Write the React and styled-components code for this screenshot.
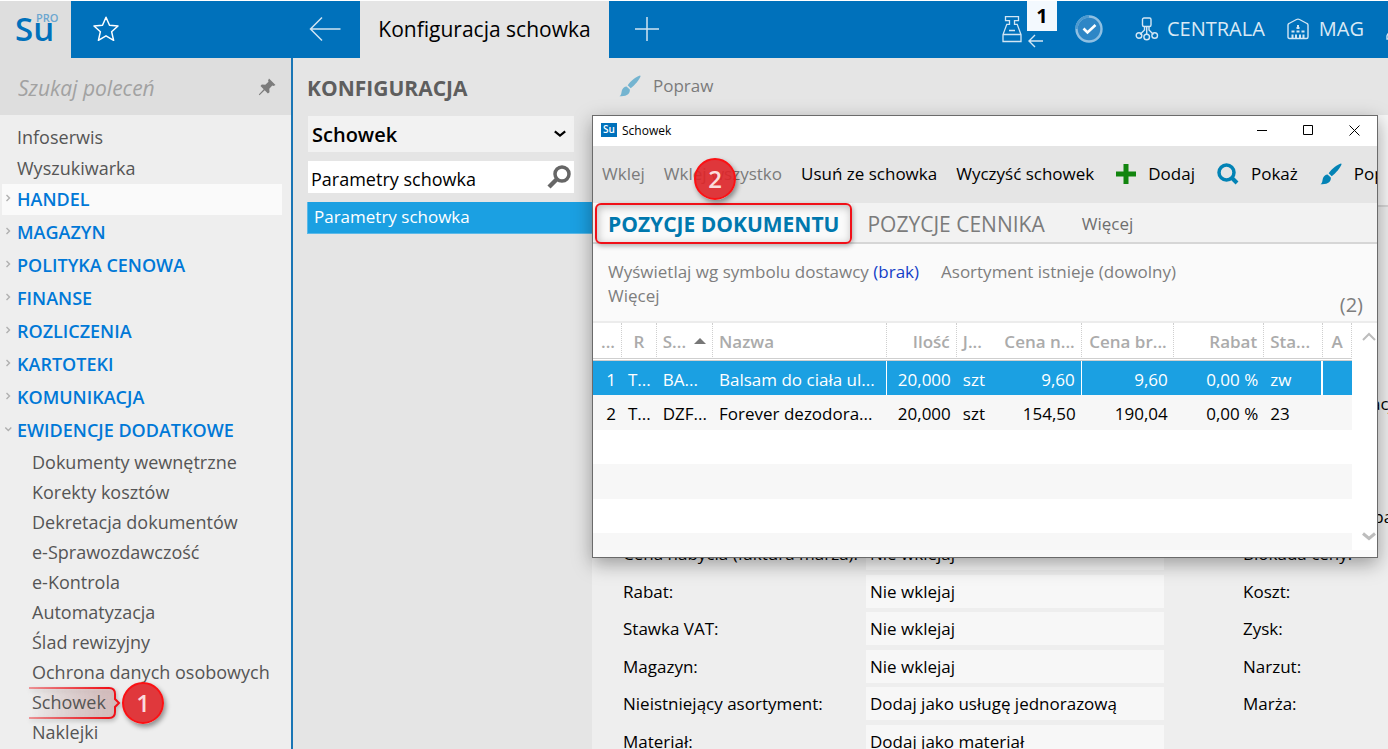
import React from 'react'
import styled, { createGlobalStyle } from 'styled-components'

const GlobalStyle = createGlobalStyle`
    *, *::before, *::after{
        box-sizing: border-box;
    }

    body{
        margin: 0;
        background-color: #fff;
        font-family: "Open Sans", "Noto Sans", sans-serif;
        font-size: 17px;
        color: #000;
        overflow: hidden;
    }

    button, input, select{
        font: inherit;
        color: inherit;
        border: none;
        background: none;
        padding: 0;
        margin: 0;
        border-radius: 0;
        outline: none;
    }

    a{
        color: inherit;
        text-decoration: none;
    }

    ul{
        list-style: none;
        margin: 0;
        padding: 0;
    }

    svg{
        display: block;
        flex: none;
    }
`

const Page = styled.div`
    display: flex;
    flex-direction: column;
    height: 100vh;
    padding-top: 1px;
    overflow: hidden;
`

/* top bar */

const TopBar = styled.header`
    display: flex;
    align-items: stretch;
    flex: none;
    height: 57px;
    background-color: #0071bb;
    color: #d9e9f5;
    overflow: hidden;

    button{
        padding-bottom: 2px;
    }
`

const Logo = styled.a`
    position: relative;
    width: 71px;
    padding: 9px 0 0 15px;
    background-color: #dedede;
    color: #0071bb;
    font-size: 33px;
    line-height: 38px;
    font-weight: 600;
`

const LogoTag = styled.span`
    position: absolute;
    left: 36px;
    top: 11px;
    font-size: 11px;
    line-height: 11px;
    color: #6aa6d0;
`

const BarButton = styled.button`
    display: flex;
    align-items: center;
    justify-content: center;
    width: ${({ $width }) => $width || 70}px;
    margin-left: ${({ $push }) => $push ? 'auto' : '0'};
`

const BarLeft = styled.div`
    display: flex;
    width: 289px;
`

const ActiveTab = styled.button`
    width: 249px;
    background-color: #e5e5e5;
    color: #000;
    font-size: 21px;
    font-weight: 500;
    white-space: nowrap;
`

const BarRight = styled.div`
    display: flex;
    align-items: stretch;
    margin-left: auto;
    margin-right: -20px;
`

const RegisterButton = styled.button`
    display: flex;
    align-items: center;
    gap: 5px;
`

const Counter = styled.span`
    display: flex;
    flex-direction: column;
    align-self: flex-start;
    gap: 3px;
    width: 30px;
`

const CounterValue = styled.span`
    height: 30px;
    background-color: #f3f9fe;
    color: #000;
    font-size: 20px;
    line-height: 30px;
    font-weight: 700;
    text-align: center;
`

const Place = styled.button`
    display: flex;
    align-items: center;
    gap: ${({ $gap }) => $gap || 8}px;
    margin-left: 14px;
    font-size: 20px;

    & + &{
        margin-left: 22px;
    }
`

/* body columns */

const Body = styled.div`
    display: flex;
    flex: 1;
    min-height: 0;
    background-color: #e5e5e5;
`

const Sidebar = styled.nav`
    flex: none;
    width: 293px;
    background-color: #eee;
    border-right: 2px solid #1a76b5;
    color: #555;
`

const CommandSearch = styled.label`
    display: flex;
    align-items: center;
    height: 57px;
    padding: 0 15px 0 18px;
    background-color: #dedede;
    color: #777;

    input{
        flex: 1;
        min-width: 0;
        height: 32px;
        padding-top: 2px;
        font-size: 21px;
        font-style: italic;
    }

    input::placeholder{
        color: #a2a2a2;
        opacity: 1;
    }
`

const Menu = styled.ul`
    padding-top: 7px;
`

const MenuLink = styled.a`
    display: flex;
    align-items: center;
    height: 31px;
    padding: 0 0 2px 17px;
    font-size: 18px;
`

const GroupLink = styled.a`
    display: flex;
    align-items: center;
    gap: 5px;
    height: 31px;
    margin: 0 9px 2px 2px;
    padding: 0 0 2px 3px;
    background-color: ${({ $active }) => $active ? '#fafafa' : 'transparent'};
    color: #0078d7;
    font-size: 18px;
    font-weight: 600;
`

const SubLink = styled.a`
    display: flex;
    align-items: center;
    height: 30px;
    padding: 0 0 2px 32px;
    font-size: 18px;
`

const Marked = styled.span`
    position: relative;
`

const Config = styled.section`
    flex: none;
    width: 299px;
    padding-left: 14px;
`

const ConfigTitle = styled.h1`
    height: 58px;
    margin: 0;
    padding-top: 2px;
    font-size: 21px;
    line-height: 57px;
    font-weight: 700;
    color: #5e5e5e;
`

const SelectBox = styled.div`
    display: grid;
    align-items: center;
    margin: 0 18px 9px 1px;
    background-color: #f2f2f2;

    select{
        grid-area: 1 / 1;
        appearance: none;
        height: 36px;
        padding-left: 4px;
        font-size: 20px;
        font-weight: 600;
    }

    svg{
        grid-area: 1 / 1;
        justify-self: end;
        margin-right: 8px;
        pointer-events: none;
    }
`

const FilterBox = styled.label`
    display: flex;
    align-items: center;
    height: 32px;
    margin: 0 18px 9px 1px;
    padding: 0 3px;
    background-color: #fff;
    color: #666;

    input{
        flex: 1;
        min-width: 0;
        height: 32px;
        padding-top: 3px;
        font-size: 18px;
        color: #000;
    }
`

const ConfigItem = styled.a`
    display: block;
    height: 32px;
    padding-left: 6px;
    border: 1px solid #5bb9e8;
    border-width: 0 0 1px 1px;
    background-color: #1ba0e2;
    color: #fff;
    font-size: 17px;
    line-height: 29px;
`

const Main = styled.main`
    flex: 1;
    min-width: 0;
    overflow: hidden;
`

const Tools = styled.div`
    display: flex;
    align-items: center;
    height: 57px;
    padding: 0 0 2px 27px;
    color: #777;
`

const ToolButton = styled.button`
    display: flex;
    align-items: center;
    flex: none;
    gap: 12px;
    font-size: 17px;
    color: ${({ $muted }) => $muted ? '#7b7b7b' : '#000'};
    white-space: nowrap;
`

const Banner = styled.div`
    height: 92px;
    border-bottom: 2px solid #d6d6d6;
    background-color: #f7f7f7;
`

const Form = styled.form`
    padding: 180px 0 0 31px;
    background-color: #eee;
    font-size: 17px;
`

const FormRow = styled.div`
    display: grid;
    grid-template-columns: 243px 298px minmax(0, 1fr);
    align-items: center;
    height: 33px;
    margin-bottom: 4px;

    &:nth-child(odd){
        margin-bottom: 5px;
    }

    label{
        white-space: nowrap;
    }

    input{
        min-width: 0;
        height: 33px;
        padding-left: 4px;
        background-color: #f7f7f7;
    }
`

const SideLabel = styled.span`
    padding-left: 79px;
    white-space: nowrap;
`

/* clipboard window */

const Window = styled.section`
    position: absolute;
    left: 592px;
    top: 115px;
    right: 10px;
    height: 443px;
    display: flex;
    flex-direction: column;
    border: 1px solid #6b6b6b;
    background-color: #fafafa;
    box-shadow: 0 6px 18px rgba(0, 0, 0, 0.35);
`

const TitleBar = styled.header`
    display: flex;
    align-items: center;
    flex: none;
    height: 30px;
    padding: 0 0 2px 8px;
    background-color: #fff;
    font-size: 12px;
`

const WindowIcon = styled.span`
    width: 16px;
    height: 14px;
    margin-right: 5px;
    background-color: #0071bb;
    color: #fff;
    font-size: 10px;
    line-height: 13px;
    font-weight: 600;
    text-align: center;
`

const WindowButtons = styled.div`
    display: flex;
    margin-left: auto;

    button{
        display: flex;
        align-items: center;
        justify-content: center;
        width: 46px;
        height: 28px;
    }
`

const WindowTools = styled(Tools)`
    flex: none;
    gap: 19px;
    padding-left: 9px;
    background-color: #e5e5e5;
    overflow: hidden;

    svg{
        margin-left: 3px;
    }
`

const Tabs = styled.div`
    display: flex;
    align-items: center;
    flex: none;
    height: 41px;
    border-bottom: 2px solid #d6d6d6;
    background-color: #f2f2f2;
`

const Tab = styled.button`
    position: relative;
    height: 39px;
    padding: 3px 13px 0 15px;
    font-size: 21px;
    font-weight: ${({ $active }) => $active ? 700 : 400};
    background-color: ${({ $active }) => $active ? '#fafafa' : 'transparent'};
    color: ${({ $active }) => $active ? '#0078ae' : '#7b7b7b'};
    white-space: nowrap;
`

const MoreTab = styled.button`
    margin-left: 24px;
    padding-top: 2px;
    font-size: 17px;
    color: #6e6e6e;
`

const Filters = styled.div`
    display: flex;
    justify-content: space-between;
    flex: none;
    height: 79px;
    padding: 16px 14px 0 15px;
    border-bottom: 2px solid #ececec;
    color: #7e7e7e;
    line-height: 24px;
`

const FilterList = styled.div`
    display: grid;
    grid-template-columns: auto auto;
    align-content: start;
    column-gap: 22px;

    button{
        text-align: left;
        line-height: 24px;
    }

    b{
        font-weight: 400;
        color: #1440c8;
    }
`

const Count = styled.span`
    align-self: flex-end;
    padding-bottom: 4px;
    font-size: 20px;
`

const GridArea = styled.div`
    display: flex;
    flex: 1;
    min-height: 0;
    margin-bottom: 7px;
    background-color: #fff;
    overflow: hidden;
`

const Table = styled.table`
    flex: 1;
    align-self: flex-start;
    min-width: 0;
    border-spacing: 0;
    table-layout: fixed;
    font-size: 17px;

    th, td{
        overflow: hidden;
        white-space: nowrap;
        padding: 2px 6px 0 6px;
        height: 34px;
    }

    tbody tr:nth-child(even) td{
        height: 35px;
    }
`

const HeadCell = styled.th`
    && {
        height: 38px;
    }
    color: #ababab;
    font-weight: 600;
    text-align: ${({ $align }) => $align || 'left'};
    border-right: ${({ $plain }) => $plain ? 'none' : '1px dotted #cfcfcf'};
    border-bottom: 3px double #cfcfcf;

    svg{
        display: inline-block;
        margin-left: 8px;
        vertical-align: 4px;
    }
`

const Row = styled.tr`
    background-color: ${({ $index }) => $index % 2 ? '#f7f7f7' : '#fff'};

    ${({ $selected }) => $selected && `
        && {
            background-color: #1ba0e2;
            color: #fff;
        }
    `}
`

const Cell = styled.td`
    text-align: ${({ $align }) => $align || 'left'};
    border-right: ${({ $split }) => $split ? `${$split}px solid #fff` : 'none'};
`

const Scroll = styled.div`
    display: flex;
    flex-direction: column;
    justify-content: space-between;
    align-items: center;
    width: 25px;
    padding: 9px 0 9px 9px;

    button{
        display: flex;
    }
`

/* numbered markers */

const Marker = styled.span`
    position: absolute;
    left: ${({ $left }) => $left}px;
    top: ${({ $top }) => $top}px;
    z-index: 2;
    display: flex;
    align-items: center;
    justify-content: center;
    width: 42px;
    height: 42px;
    padding-bottom: 2px;
    border: 2px solid #fb1114;
    border-radius: 50%;
    background-color: rgba(222, 36, 40, 0.9);
    box-shadow: 2px 3px 5px rgba(0, 0, 0, 0.4);
    color: #fbdcdc;
    font-size: 24px;
    font-weight: 600;
`

const TabFrame = styled.span`
    position: absolute;
    left: 2px;
    right: 0;
    top: 0;
    height: 41px;
    border: 2px solid #f01018;
    border-radius: 6px;
    box-shadow: 1px 2px 5px rgba(0, 0, 0, 0.3), inset 1px 2px 8px rgba(0, 0, 0, 0.25);
`

const Bracket = styled.svg`
    position: absolute;
    left: -3px;
    top: -3px;
    filter: drop-shadow(1px 2px 2px rgba(0, 0, 0, 0.3));
`

const MarkedText = styled.span`
    position: relative;
`

const Brush = ({ color }) => (
    <svg width="22" height="22" viewBox="0 0 22 22" fill={color}>
        <path d="M21 .5c-3 .6-9.800 5.500-12.300 9.800l3 2.900C15.500 10.500 20.600 4.500 21.600 1z" />
        <path d="M7.600 11.400l3.200 3.200c.6 4-2.800 7.200-10.300 6.600 2-1.200 1.700-3 2.300-5.500.7-2.600 2.600-4.300 4.800-4.300z" />
    </svg>
)

const Chevron = ({ down }) => (
    <svg width="7" height="9" viewBox="0 0 7 9" fill="none" stroke="#b0b0b0" strokeWidth="1.4">
        <path d={down ? 'M.3 2.500l3 3 3-3' : 'M1.500 1l3 3-3 3'} />
    </svg>
)

const groups = ['HANDEL', 'MAGAZYN', 'POLITYKA CENOWA', 'FINANSE', 'ROZLICZENIA', 'KARTOTEKI', 'KOMUNIKACJA', 'EWIDENCJE DODATKOWE']

const records = [
    'Dokumenty wewnętrzne', 'Korekty kosztów', 'Dekretacja dokumentów', 'e-Sprawozdawczość', 'e-Kontrola',
    'Automatyzacja', 'Ślad rewizyjny', 'Ochrona danych osobowych', 'Schowek', 'Naklejki',
]

const fields = [
    ['', '', 'Numer identyfikacji:'],
    ['', '', ''],
    ['', '', ''],
    ['', '', 'Blokada rabatu (para):'],
    ['Cena nabycia (faktura marża):', 'Nie wklejaj', 'Blokada ceny:'],
    ['Rabat:', 'Nie wklejaj', 'Koszt:'],
    ['Stawka VAT:', 'Nie wklejaj', 'Zysk:'],
    ['Magazyn:', 'Nie wklejaj', 'Narzut:'],
    ['Nieistniejący asortyment:', 'Dodaj jako usługę jednorazową', 'Marża:'],
    ['Materiał:', 'Dodaj jako materiał', ''],
]

const columns = [
    { title: '...', width: 29, align: 'right' },
    { title: 'R', width: 34, align: 'center' },
    { title: 'S...', width: 56, sorted: true },
    { title: 'Nazwa', width: 174, split: 1 },
    { title: 'Ilość', width: 70, align: 'right' },
    { title: 'J...', width: 34, plain: true },
    { title: 'Cena n...', width: 91, align: 'right', split: 1 },
    { title: 'Cena br...', width: 92, align: 'right' },
    { title: 'Rabat', width: 91, align: 'right' },
    { title: 'Sta...', width: 59, split: 2 },
    { title: 'A', width: 29, align: 'center' },
]

const rows = [
    ['1', 'T...', 'BA...', 'Balsam do ciała ul...', '20,000', 'szt', '9,60', '9,60', '0,00 %', 'zw', ''],
    ['2', 'T...', 'DZF...', 'Forever dezodora...', '20,000', 'szt', '154,50', '190,04', '0,00 %', '23', ''],
    [], [], [], [],
]

function Header() {
    return (
        <TopBar>
            <Logo href="#start">Su<LogoTag>PRO</LogoTag></Logo>
            <BarLeft>
                <BarButton aria-label="Ulubione">
                    <svg width="26" height="26" viewBox="0 0 26 26" fill="none" stroke="#fff" strokeWidth="1.500" strokeLinejoin="round">
                        <path d="M13 1.200l3.500 8 8.500.8-6.400 5.700 2 8.600L13 19.800l-7.600 4.500 2-8.600L1 10l8.500-.8z" />
                    </svg>
                </BarButton>
                <BarButton $push aria-label="Wstecz">
                    <svg width="32" height="26" viewBox="0 0 32 26" fill="none" stroke="#cfe3f2" strokeWidth="1.500">
                        <path d="M31.500 13H1.500M13 1.500L1.500 13 13 24.500" />
                    </svg>
                </BarButton>
            </BarLeft>
            <ActiveTab>Konfiguracja schowka</ActiveTab>
            <BarButton $width={75} aria-label="Nowa karta">
                <svg width="26" height="26" viewBox="0 0 26 26" stroke="#cfe3f2" strokeWidth="1.500">
                    <path d="M13 1v24M1 13h24" />
                </svg>
            </BarButton>
            <BarRight>
                <RegisterButton aria-label="Kasa">
                    <svg width="20" height="29" viewBox="0 0 20 29" fill="none" stroke="#d3e6f4" strokeWidth="1.300">
                        <path d="M3.500 2.700h13v4h-4v3.600h2.700L19 20.500v7H1v-7l3.800-10.200h2.700V6.700h-4zM1 20.500h18M7 16.500h6" />
                    </svg>
                    <Counter>
                        <CounterValue>1</CounterValue>
                        <svg width="17" height="14" viewBox="0 0 17 14" fill="none" stroke="#d3e6f4" strokeWidth="1.400">
                            <path d="M16 7H2M8 1L2 7l6 6" />
                        </svg>
                    </Counter>
                </RegisterButton>
                <BarButton $width={64} aria-label="Status">
                    <svg width="30" height="30" viewBox="0 0 30 30" fill="none">
                        <circle cx="15" cy="15" r="12.500" fill="#2e86c6" stroke="#8fc0e3" strokeWidth="2.400" />
                        <path d="M2.500 15A12.500 12.500 0 0 1 15 2.500" stroke="#4d9ad0" strokeWidth="2.400" />
                        <path d="M9.500 14.500l4 4 8-7.500" stroke="#fff" strokeWidth="2.600" />
                    </svg>
                </BarButton>
                <Place>
                    <svg width="24" height="24" viewBox="0 0 24 24" fill="none" stroke="#d3e6f4" strokeWidth="1.400">
                        <rect x="7.500" y="1" width="8.500" height="8.500" rx="1.500" />
                        <path d="M9.500 9.500v3.500L5 17.500M14 9.500v3.500l4.500 4.500M11.700 9.500V17" />
                        <circle cx="4" cy="18.500" r="2.800" />
                        <circle cx="11.700" cy="20" r="2.800" />
                        <circle cx="19.700" cy="18.500" r="2.800" />
                    </svg>
                    CENTRALA
                </Place>
                <Place $gap={10}>
                    <svg width="22" height="22" viewBox="0 0 22 22" fill="none" stroke="#d3e6f4" strokeWidth="1.400">
                        <path d="M1 19V7q0-1 1-1.500l7.500-4q1.500-.8 3 0l7.500 4q1 .5 1 1.500v12q0 1.500-1.500 1.500h-17Q1 20.500 1 19z" />
                        <path d="M5.500 20v-3.500M9 20v-3.500M13 20v-3.500M16.500 20v-3.500M11 7v3" strokeWidth="2" />
                        <path d="M4.500 13.500h3M9.500 13.500h3M14.500 13.500h3M9.500 10h3" strokeWidth="2" />
                    </svg>
                    MAG
                </Place>
                <Place aria-label="Użytkownik">
                    <svg width="22" height="22" viewBox="0 0 22 22" fill="none" stroke="#d3e6f4" strokeWidth="1.400">
                        <circle cx="11" cy="6" r="4.500" />
                        <path d="M1 21v-3q1-4 6-5h8q5 1 6 5v3z" />
                    </svg>
                </Place>
            </BarRight>
        </TopBar>
    )
}

function SideMenu() {
    return (
        <Sidebar>
            <CommandSearch>
                <input placeholder="Szukaj poleceń" aria-label="Szukaj poleceń" />
                <svg width="18" height="18" viewBox="0 0 18 18" fill="#7c7c7c">
                    <path d="M11 .5L17.500 7l-2 .9-1.200-.4-3 3.200.2 3.500-1.600 1.300-3.200-3.200L1.500 17.200.8 16.500l4.900-5.200L2.500 8.100l1.300-1.600 3.500.2 3.200-3-.4-1.200z" />
                </svg>
            </CommandSearch>
            <Menu>
                <li><MenuLink href="#infoserwis">Infoserwis</MenuLink></li>
                <li><MenuLink href="#wyszukiwarka">Wyszukiwarka</MenuLink></li>
                {groups.map((group, i) => (
                    <li key={group}>
                        <GroupLink href="#grupa" $active={i === 0}>
                            <Chevron down={i === groups.length - 1} />
                            {group}
                        </GroupLink>
                    </li>
                ))}
                {records.map(name => (
                    <li key={name}>
                        <SubLink href="#ewidencja">
                            {name === 'Schowek' ? (
                                <Marked>
                                    <Bracket width="92" height="32" viewBox="0 0 92 32" fill="none">
                                        <defs>
                                            <linearGradient id="edge" gradientUnits="userSpaceOnUse" x1="0" y1="0" x2="80" y2="0">
                                                <stop offset="0" stopColor="#f01018" stopOpacity="0.4" />
                                                <stop offset="1" stopColor="#f01018" />
                                            </linearGradient>
                                            <linearGradient id="tint" gradientUnits="userSpaceOnUse" x1="0" y1="0" x2="86" y2="0">
                                                <stop offset="0" stopColor="#e5b5b5" stopOpacity="0" />
                                                <stop offset="1" stopColor="#dcb4b4" stopOpacity="0.6" />
                                            </linearGradient>
                                        </defs>
                                        <path d="M0 1h80q6 0 6 6v5l4 4-4 4v5q0 6-6 6H0" fill="url(#tint)" stroke="url(#edge)" strokeWidth="2" />
                                    </Bracket>
                                    <MarkedText>{name}</MarkedText>
                                    <Marker $left={90} $top={-8}>1</Marker>
                                </Marked>
                            ) : name}
                        </SubLink>
                    </li>
                ))}
            </Menu>
        </Sidebar>
    )
}

function ConfigPanel() {
    return (
        <Config>
            <ConfigTitle>KONFIGURACJA</ConfigTitle>
            <SelectBox>
                <select aria-label="Obszar konfiguracji">
                    <option>Schowek</option>
                </select>
                <svg width="12" height="8" viewBox="0 0 12 8" fill="none" stroke="#000" strokeWidth="2.200">
                    <path d="M.8 1.300L6 5.500l5.200-4.200" />
                </svg>
            </SelectBox>
            <FilterBox>
                <input defaultValue="Parametry schowka" aria-label="Filtr" />
                <svg width="24" height="24" viewBox="0 0 24 24" fill="none" stroke="currentColor">
                    <circle cx="15" cy="9" r="7" strokeWidth="3.500" />
                    <path d="M10 14L2 22" strokeWidth="4.500" />
                </svg>
            </FilterBox>
            <ConfigItem href="#parametry">Parametry schowka</ConfigItem>
        </Config>
    )
}

function Settings() {
    return (
        <Main>
            <Tools>
                <ToolButton $muted><Brush color="#74b4d0" />Popraw</ToolButton>
            </Tools>
            <Banner />
            <Form>
                {fields.map(([label, value, side], i) => (
                    <FormRow key={i}>
                        <label htmlFor={`field-${i}`}>{label}</label>
                        <input id={`field-${i}`} defaultValue={value} />
                        <SideLabel>{side}</SideLabel>
                    </FormRow>
                ))}
            </Form>
        </Main>
    )
}

function ClipboardWindow() {
    return (
        <Window aria-label="Schowek">
            <TitleBar>
                <WindowIcon>Su</WindowIcon>
                Schowek
                <WindowButtons>
                    <button aria-label="Minimalizuj">
                        <svg width="10" height="10" stroke="#000"><path d="M0 5.500h10" /></svg>
                    </button>
                    <button aria-label="Maksymalizuj">
                        <svg width="10" height="10" fill="none" stroke="#000"><path d="M.5.5h9v9h-9z" /></svg>
                    </button>
                    <button aria-label="Zamknij">
                        <svg width="11" height="11" stroke="#000"><path d="M.5.5l10 10M10.500.5l-10 10" /></svg>
                    </button>
                </WindowButtons>
            </TitleBar>
            <WindowTools>
                <ToolButton $muted>Wklej</ToolButton>
                <ToolButton $muted>Wklej wszystko</ToolButton>
                <ToolButton>Usuń ze schowka</ToolButton>
                <ToolButton>Wyczyść schowek</ToolButton>
                <ToolButton>
                    <svg width="20" height="20" viewBox="0 0 20 20"><path d="M10 0v20M0 10h20" stroke="#12850f" strokeWidth="5" /></svg>
                    Dodaj
                </ToolButton>
                <ToolButton>
                    <svg width="22" height="22" viewBox="0 0 22 22" fill="none" stroke="#0383b5">
                        <circle cx="9.500" cy="9.500" r="7.500" strokeWidth="3.500" />
                        <path d="M14.500 14.500l5.500 5.500" strokeWidth="4" />
                    </svg>
                    Pokaż
                </ToolButton>
                <ToolButton><Brush color="#0383b5" />Popraw</ToolButton>
            </WindowTools>
            <Marker $left={101} $top={42}>2</Marker>
            <Tabs>
                <Tab $active>POZYCJE DOKUMENTU<TabFrame /></Tab>
                <Tab>POZYCJE CENNIKA</Tab>
                <MoreTab>Więcej</MoreTab>
            </Tabs>
            <Filters>
                <FilterList>
                    <button>Wyświetlaj wg symbolu dostawcy <b>(brak)</b></button>
                    <button>Asortyment istnieje (dowolny)</button>
                    <button>Więcej</button>
                </FilterList>
                <Count>(2)</Count>
            </Filters>
            <GridArea>
                <Table>
                    <colgroup>
                        {columns.map(({ title, width }) => <col key={title} width={width} />)}
                    </colgroup>
                    <thead>
                        <tr>
                            {columns.map(({ title, align, plain, sorted }) => (
                                <HeadCell key={title} $align={align} $plain={plain}>
                                    {title}
                                    {sorted && <svg width="12" height="6" fill="#777"><path d="M0 6l6-6 6 6z" /></svg>}
                                </HeadCell>
                            ))}
                        </tr>
                    </thead>
                    <tbody>
                        {rows.map((row, i) => (
                            <Row key={i} $index={i} $selected={i === 0}>
                                {columns.map(({ title, align, split }, c) => (
                                    <Cell key={title} $align={align} $split={i === 0 ? split : 0}>{row[c]}</Cell>
                                ))}
                            </Row>
                        ))}
                    </tbody>
                </Table>
                <Scroll>
                    <button aria-label="W górę">
                        <svg width="14" height="9" fill="none" stroke="#bdbdbd" strokeWidth="2"><path d="M1 8l6-6 6 6" /></svg>
                    </button>
                    <button aria-label="W dół">
                        <svg width="14" height="9" fill="none" stroke="#bdbdbd" strokeWidth="3"><path d="M1 1.500l6 5 6-5" /></svg>
                    </button>
                </Scroll>
            </GridArea>
        </Window>
    )
}

export default function App() {
    return (
        <>
            <GlobalStyle />
            <Page>
                <Header />
                <Body>
                    <SideMenu />
                    <ConfigPanel />
                    <Settings />
                </Body>
                <ClipboardWindow />
            </Page>
        </>
    )
}
